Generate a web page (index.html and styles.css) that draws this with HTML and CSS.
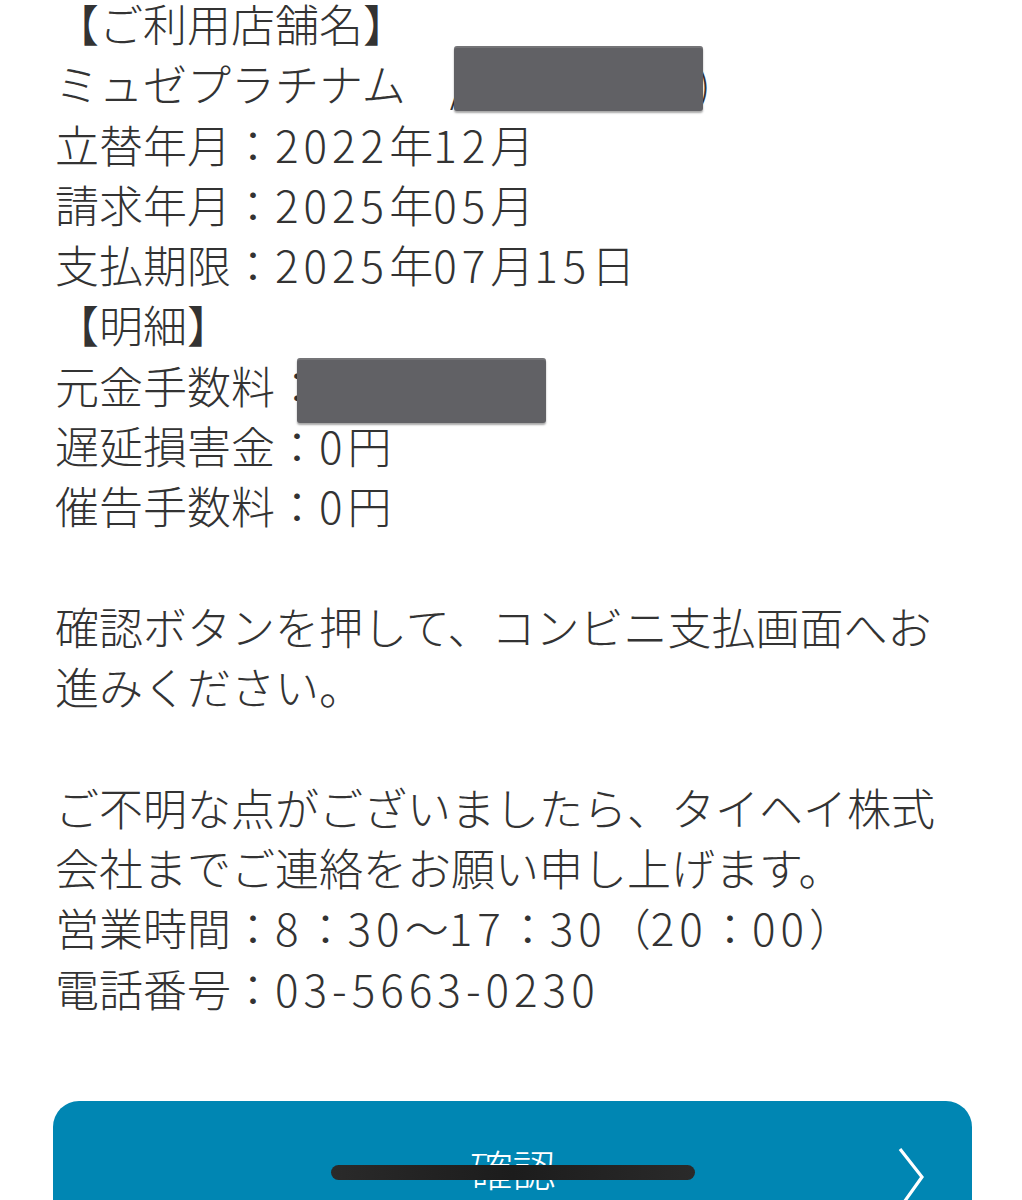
FILE: index.html
```html
<!DOCTYPE html>
<html lang="ja">
<head>
<meta charset="utf-8">
<link rel="stylesheet" href="styles.css">
</head>
<body>
<main class="page">
  <section class="block">
    <div class="line">【ご利用店舗名】</div>
    <div class="line">ミュゼプラチナム　<span class="peek">/</span><span class="redact redact-shop"></span><span class="peek-r">)</span></div>
    <div class="line">立替年月：<span class="num">2022</span>年<span class="num">12</span>月</div>
    <div class="line">請求年月：<span class="num">2025</span>年<span class="num">05</span>月</div>
    <div class="line">支払期限：<span class="num">2025</span>年<span class="num">07</span>月<span class="num">15</span>日</div>
    <div class="line">【明細】</div>
    <div class="line">元金手数料：<span class="redact redact-fee"></span></div>
    <div class="line">遅延損害金：<span class="num">0</span>円</div>
    <div class="line">催告手数料：<span class="num">0</span>円</div>
  </section>
  <section class="block gap">
    <p class="para">確認ボタンを押して、コンビニ支払画面へお進みください。</p>
  </section>
  <section class="block gap">
    <p class="para">ご不明な点がございましたら、タイヘイ株式会社までご連絡をお願い申し上げます。</p>
    <div class="line">営業時間：<span class="num">8</span>：<span class="num">30</span>～<span class="num">17</span>：<span class="num">30</span>（<span class="num">20</span>：<span class="num">00</span>）</div>
    <div class="line">電話番号：<span class="num">03-5663-0230</span></div>
  </section>
  <button class="confirm" type="button">
    <span class="confirm-label">確認</span>
    <svg class="chev" width="30" height="60" viewBox="0 0 30 60" aria-hidden="true">
      <path d="M4 2 L26 30 L6 58" fill="none" stroke="#ffffff" stroke-width="3.2" stroke-linejoin="miter"/>
    </svg>
  </button>
</main>
<div class="home-indicator"></div>
</body>
</html>
```

FILE: styles.css
```css
html, body {
  margin: 0;
  padding: 0;
  background: #ffffff;
  overflow: hidden;
}

body {
  width: 1022px;
  height: 1200px;
  position: relative;
  font-family: "Noto Sans CJK JP", "Noto Sans", sans-serif;
  font-weight: 300;
  color: #333333;
}

.page {
  padding: 0 50px 0 55px;
  margin-top: -7px;
}

.block {
  font-size: 44px;
  line-height: 60.3px;
}

.gap {
  margin-top: 60.3px;
}

.line {
  white-space: nowrap;
}

.para {
  margin: 0;
  width: 919px;
}

.num {
  letter-spacing: 5px;
}

.redact {
  display: inline-block;
  width: 249px;
  height: 65px;
  background: #616165;
  border-radius: 3px;
  vertical-align: middle;
  margin: -10px 0;
  box-shadow: 0 2px 2px rgba(0, 0, 0, 0.35), inset 0 2px 0 rgba(255, 255, 255, 0.12);
}

.redact-shop {
  margin-left: -4px;
  position: relative;
  top: -12px;
}

.redact-fee {
  margin-left: -22px;
  position: relative;
  top: -1px;
}

.peek {
  display: inline-block;
  width: 8px;
  overflow: hidden;
  vertical-align: top;
}

.peek-r {
  display: inline-block;
  margin-left: -5px;
  font-size: 40px;
  vertical-align: top;
}

.confirm {
  display: flex;
  align-items: center;
  justify-content: center;
  position: relative;
  margin: 83px 0 0 -2px;
  width: 919px;
  height: 148px;
  border: none;
  border-radius: 26px;
  background: #0086b3;
  color: #ffffff;
  font-family: "Noto Sans CJK JP", sans-serif;
  font-weight: 300;
  font-size: 43px;
  padding: 0 0 14px;
}

.confirm-label {
  line-height: 1;
}

.chev {
  position: absolute;
  right: 46px;
  top: 46px;
}

.home-indicator {
  position: absolute;
  left: 331px;
  top: 1165px;
  width: 364px;
  height: 15px;
  border-radius: 8px;
  background: linear-gradient(90deg, #2a2a2a, #1c1c1c 50%, #2a2a2a);
}
```
